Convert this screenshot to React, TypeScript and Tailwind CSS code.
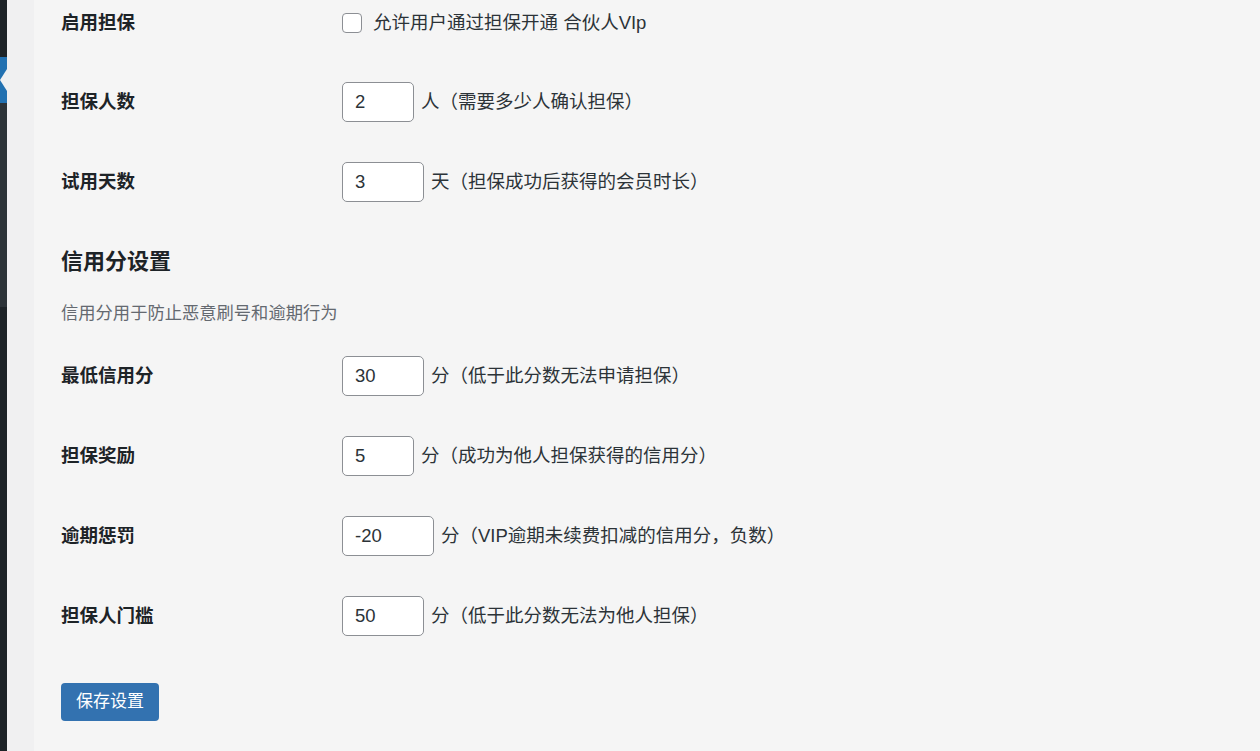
import { useState } from "react";

type Field = {
  label: string;
  value: string;
  width: string;
  suffix: string;
};

const guaranteeFields: Field[] = [
  { label: "担保人数", value: "2", width: "w-[72px]", suffix: "人（需要多少人确认担保）" },
  { label: "试用天数", value: "3", width: "w-[82px]", suffix: "天（担保成功后获得的会员时长）" },
];

const creditFields: Field[] = [
  { label: "最低信用分", value: "30", width: "w-[82px]", suffix: "分（低于此分数无法申请担保）" },
  { label: "担保奖励", value: "5", width: "w-[72px]", suffix: "分（成功为他人担保获得的信用分）" },
  { label: "逾期惩罚", value: "-20", width: "w-[92px]", suffix: "分（VIP逾期未续费扣减的信用分，负数）" },
  { label: "担保人门槛", value: "50", width: "w-[82px]", suffix: "分（低于此分数无法为他人担保）" },
];

const font = "font-['Liberation_Sans','Noto_Sans_CJK_SC',sans-serif]";

export default function App() {
  const [enabled, setEnabled] = useState(false);

  return (
    <div className={`flex h-[751px] w-[1260px] overflow-hidden bg-[#f0f0f1] ${font}`}>
      <Sidebar />
      <div className="w-[27px] shrink-0 bg-[#f0f0f1]" />
      <main className="flex-1 bg-[#f5f5f5] pl-[27px]">
        <div className="flex h-[46px] items-center">
          <div className="w-[281px] text-[18.5px] font-bold text-[#1d2327]">启用担保</div>
          <label className="flex items-center gap-[11px] text-[18.5px] text-[#2c3338]">
            <input
              checked={enabled}
              className="size-[20px] appearance-none rounded-[4px] border border-[#8c8f94] bg-white"
              onChange={(event) => setEnabled(event.target.checked)}
              type="checkbox"
            />
            允许用户通过担保开通 合伙人VIp
          </label>
        </div>

        <div className="mt-[16px]">
          {guaranteeFields.map((field) => (
            <FieldRow field={field} key={field.label} />
          ))}
        </div>

        <h2 className="mt-[25px] h-[30px] text-[22px] leading-[30px] font-bold text-[#1d2327]">
          信用分设置
        </h2>
        <p className="mt-[24px] h-[24px] text-[17.3px] leading-[24px] text-[#646970]">
          信用分用于防止恶意刷号和逾期行为
        </p>

        <div className="mt-[11px]">
          {creditFields.map((field) => (
            <FieldRow field={field} key={field.label} />
          ))}
        </div>

        <button
          className="mt-[27px] h-[38px] rounded-[4px] bg-[#3372b0] px-[15px] text-[17px] text-white"
          type="button"
        >
          保存设置
        </button>
      </main>
    </div>
  );
}

function FieldRow({ field }: { field: Field }) {
  const [value, setValue] = useState(field.value);

  return (
    <div className="flex h-[80px] items-center">
      <div className="w-[281px] text-[18.5px] font-bold text-[#1d2327]">{field.label}</div>
      <input
        className={`h-[40px] ${field.width} rounded-[5px] border border-[#8c8f94] bg-white px-[12px] text-[18.5px] text-[#2c3338] outline-none`}
        onChange={(event) => setValue(event.target.value)}
        value={value}
      />
      <span className="ml-[7px] text-[18.5px] text-[#2c3338]">{field.suffix}</span>
    </div>
  );
}

function Sidebar() {
  return (
    <div className="flex w-[7px] shrink-0 flex-col bg-[#1d2327]">
      <div className="h-[57px]" />
      <div className="relative h-[46px] bg-[#2271b1]">
        <div className="absolute top-[12px] right-0 h-0 w-0 border-y-[11px] border-r-[7px] border-y-transparent border-r-[#f0f0f1]" />
      </div>
      <div className="h-[204px] bg-[#2c3338]" />
    </div>
  );
}
